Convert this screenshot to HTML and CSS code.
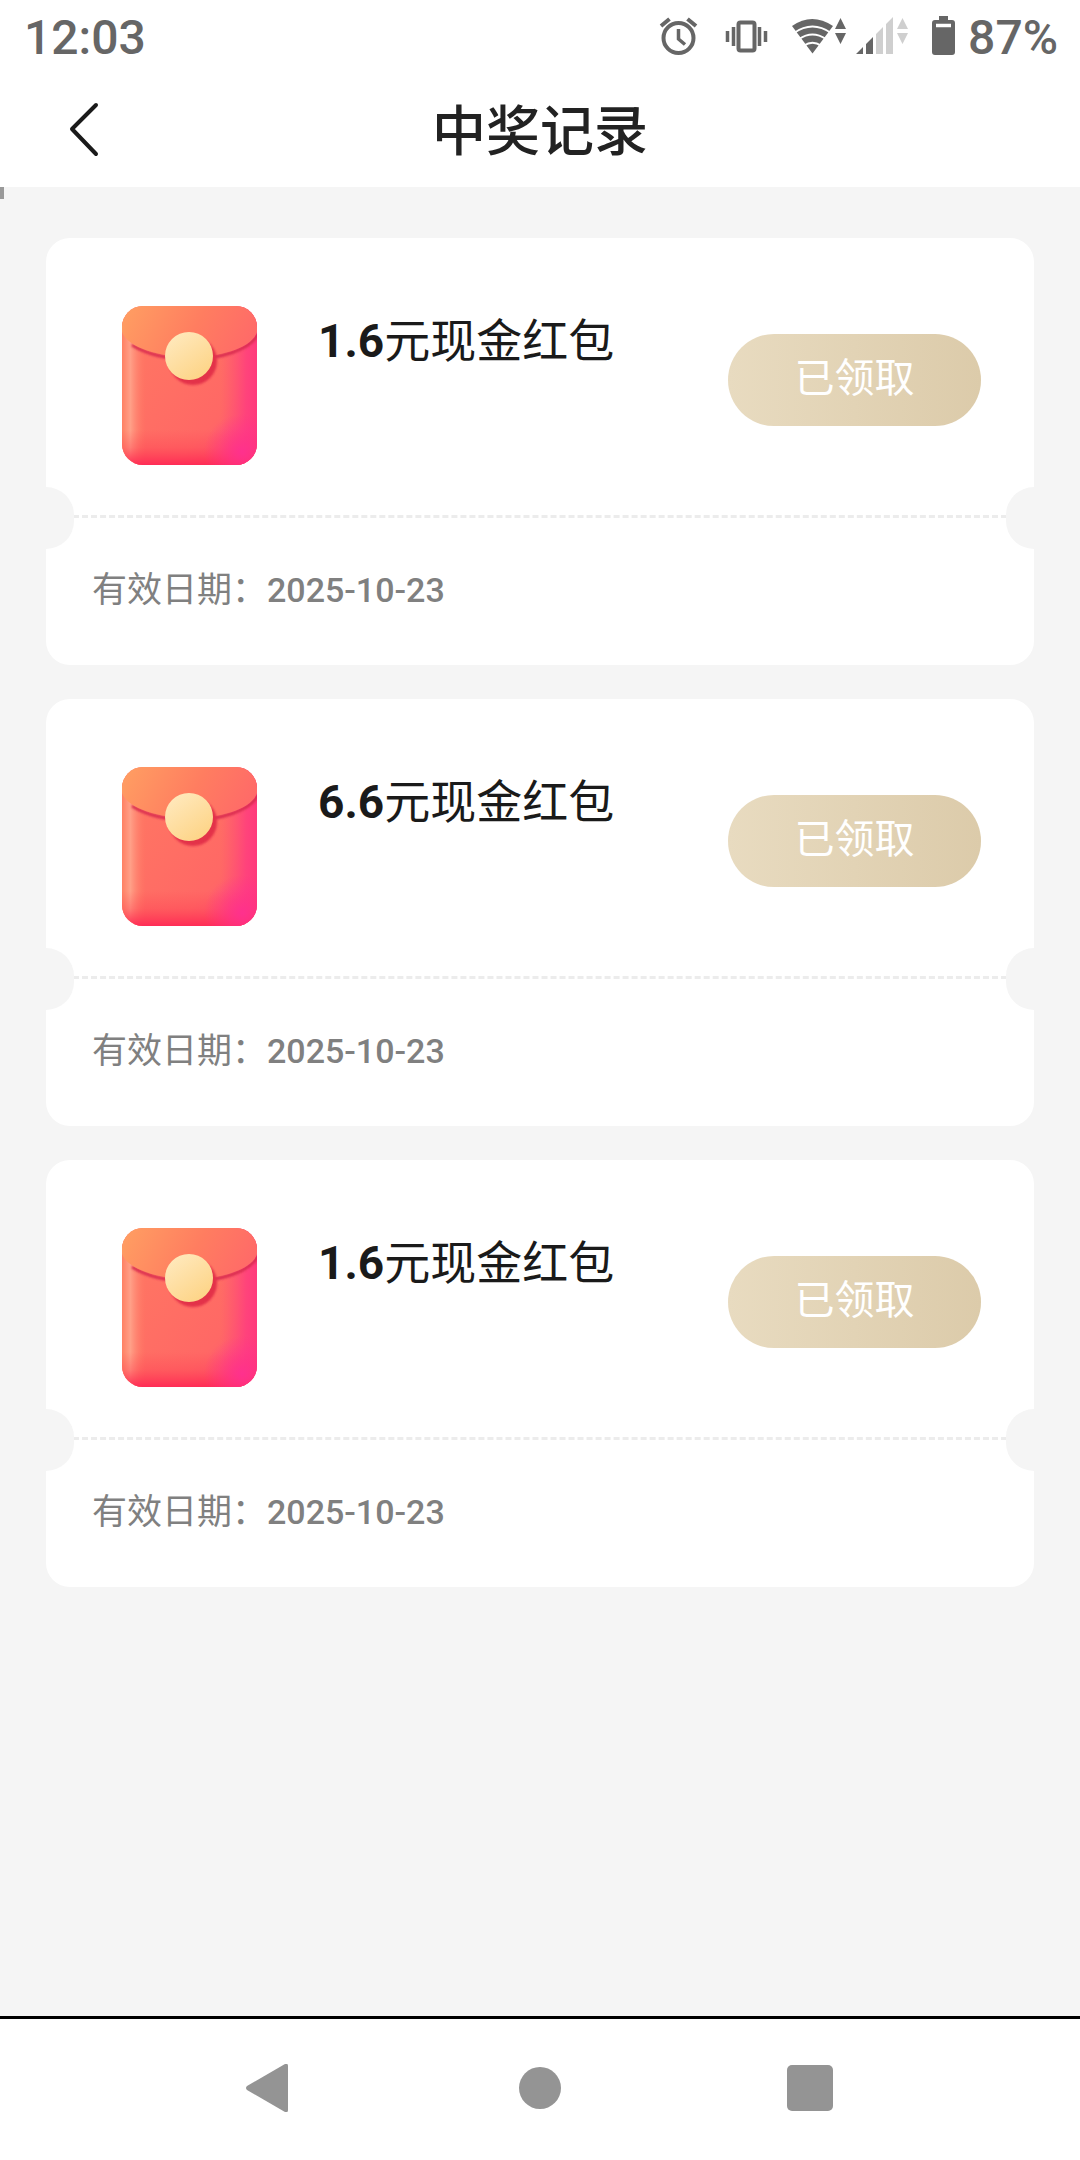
FILE: index.html
```html
<!DOCTYPE html>
<html lang="zh-CN">
<head>
<meta charset="utf-8">
<meta name="viewport" content="width=device-width, initial-scale=1">
<title>中奖记录</title>
<link rel="stylesheet" href="styles.css">
</head>
<body>
<svg class="sprite" width="0" height="0" aria-hidden="true">
  <defs>
    <linearGradient id="env-body" x1="0" y1="0" x2="1" y2="1">
      <stop offset="0" stop-color="#ff7a62"/>
      <stop offset="0.7" stop-color="#ff6865"/>
      <stop offset="1" stop-color="#ff4f7a"/>
    </linearGradient>
    <linearGradient id="env-left" x1="0" y1="0" x2="1" y2="0">
      <stop offset="0" stop-color="#ff8062"/>
      <stop offset="0.35" stop-color="#ffa088"/>
      <stop offset="1" stop-color="#ff7a62" stop-opacity="0"/>
    </linearGradient>
    <linearGradient id="env-right" x1="0" y1="0" x2="1" y2="0">
      <stop offset="0" stop-color="#ff4a78" stop-opacity="0"/>
      <stop offset="0.7" stop-color="#ff3a80" stop-opacity="0.8"/>
      <stop offset="1" stop-color="#ff3a7c"/>
    </linearGradient>
    <linearGradient id="env-bottom" x1="0" y1="0" x2="0" y2="1">
      <stop offset="0" stop-color="#ff4050" stop-opacity="0"/>
      <stop offset="0.5" stop-color="#ff3c52" stop-opacity="0.35"/>
      <stop offset="1" stop-color="#ff2c56"/>
    </linearGradient>
    <radialGradient id="env-corner" cx="140" cy="160" r="38" gradientUnits="userSpaceOnUse">
      <stop offset="0" stop-color="#ff2f92" stop-opacity="0.9"/>
      <stop offset="0.4" stop-color="#ff2f90" stop-opacity="0.55"/>
      <stop offset="1" stop-color="#ff2f8c" stop-opacity="0"/>
    </radialGradient>
    <linearGradient id="env-flap" x1="0" y1="0.3" x2="1" y2="0.5">
      <stop offset="0" stop-color="#ff9c62"/>
      <stop offset="0.55" stop-color="#ff7d60"/>
      <stop offset="1" stop-color="#ff6a68"/>
    </linearGradient>
    <linearGradient id="env-coin" x1="0.1" y1="0" x2="0.8" y2="1">
      <stop offset="0" stop-color="#ffeac0"/>
      <stop offset="1" stop-color="#fdd384"/>
    </linearGradient>
    <clipPath id="env-clip"><rect x="20" y="14" width="135" height="159" rx="21"/></clipPath>
    <filter id="env-soft" x="-20%" y="-20%" width="140%" height="140%"><feGaussianBlur stdDeviation="1"/></filter>
  </defs>
  <symbol id="envelope" viewBox="0 0 176 176">
    <g clip-path="url(#env-clip)">
      <rect x="20" y="14" width="135" height="159" fill="url(#env-body)"/>
      <rect x="20" y="14" width="24" height="159" fill="url(#env-left)"/>
      <rect x="119" y="14" width="36" height="159" fill="url(#env-right)"/>
      <rect x="20" y="138" width="135" height="35" fill="url(#env-bottom)"/>
      <rect x="100" y="120" width="55" height="53" fill="url(#env-corner)"/>
      <path d="M30 53C46 63 66 67 88 67C118 67 148 58 156 42" fill="none" stroke="#d92c50" stroke-width="3" filter="url(#env-soft)"/>
      <path d="M20 14H155V40C150 56 118 65 88 65C58 65 26 56 20 40Z" fill="url(#env-flap)"/>
      <circle cx="91" cy="69" r="24" fill="#e3304a" filter="url(#env-soft)"/>
      <circle cx="87" cy="64" r="24" fill="url(#env-coin)"/>
    </g>
  </symbol>
</svg>

<div class="status-bar">
  <span class="status-text">12:03</span>
  <div class="status-icons">
    <svg width="52" height="72" viewBox="656 0 52 72" aria-hidden="true">
      <circle cx="678.500" cy="38" r="15" fill="none" stroke="#666" stroke-width="4"/>
      <path d="M678.500 29V39L685 44.500" fill="none" stroke="#666" stroke-width="3.500"/>
      <path d="M661 26L669.500 19M696 26L687.500 19" stroke="#666" stroke-width="4"/>
    </svg>
    <svg width="60" height="72" viewBox="716 0 60 72" aria-hidden="true">
      <rect x="738.500" y="22.500" width="16" height="28" rx="2" fill="none" stroke="#666" stroke-width="4"/>
      <path d="M727.500 31V42M733.500 27V46M759.500 27V46M765.500 31V42" stroke="#666" stroke-width="3.500"/>
    </svg>
    <svg width="64" height="72" viewBox="784 0 64 72" aria-hidden="true">
      <path d="M792 26Q812 12 833 26L812.500 53.500Z" fill="#666"/>
      <path d="M794 33Q812.500 20 831 33M799 39Q812.500 30 826 39M804 45.500Q812.500 40 821 45.500" fill="none" stroke="#fff" stroke-width="1.800"/>
      <path d="M840.500 18L846 29H835ZM840.500 44L846 33H835Z" fill="#666"/>
    </svg>
    <svg width="60" height="72" viewBox="856 0 60 72" aria-hidden="true">
      <path d="M856 54L863 47V54ZM866 54V44L873 37V54Z" fill="#666"/>
      <path d="M876 54V34L883 27V54ZM886 54V24L893 17V54ZM902.500 18L908 29H897ZM902.500 44L908 33H897Z" fill="#cfcfcf"/>
    </svg>
    <svg width="36" height="72" viewBox="924 0 36 72" aria-hidden="true">
      <path d="M939 16H948V20H952Q955 20 955 23V52Q955 55 952 55H935Q932 55 932 52V23Q932 20 935 20H939Z" fill="#666"/>
      <path d="M936 25.500H951" stroke="#fff" stroke-width="3.500"/>
    </svg>
    <span class="status-text">87%</span>
  </div>
</div>

<header class="header">
  <button class="back" type="button" aria-label="返回">
    <svg width="32" height="56" viewBox="0 0 32 56" aria-hidden="true"><path d="M28 3L4 27L28 52" fill="none" stroke="#1a1a1a" stroke-width="4" stroke-linecap="round" stroke-linejoin="round"/></svg>
  </button>
  <h1 class="title">中奖记录</h1>
</header>

<main class="records">
  <article class="ticket">
    <div class="ticket-main">
      <svg class="ticket-image" aria-hidden="true"><use href="#envelope"/></svg>
      <h2 class="prize"><b>1.6</b>元现金红包</h2>
      <button class="claimed" type="button">已领取</button>
    </div>
    <p class="validity">有效日期：<time class="date" datetime="2025-10-23">2025-10-23</time></p>
  </article>
  <article class="ticket">
    <div class="ticket-main">
      <svg class="ticket-image" aria-hidden="true"><use href="#envelope"/></svg>
      <h2 class="prize"><b>6.6</b>元现金红包</h2>
      <button class="claimed" type="button">已领取</button>
    </div>
    <p class="validity">有效日期：<time class="date" datetime="2025-10-23">2025-10-23</time></p>
  </article>
  <article class="ticket">
    <div class="ticket-main">
      <svg class="ticket-image" aria-hidden="true"><use href="#envelope"/></svg>
      <h2 class="prize"><b>1.6</b>元现金红包</h2>
      <button class="claimed" type="button">已领取</button>
    </div>
    <p class="validity">有效日期：<time class="date" datetime="2025-10-23">2025-10-23</time></p>
  </article>
</main>

<nav class="system-nav" aria-label="系统导航">
  <button class="nav-button" type="button" aria-label="后退">
    <svg width="48" height="48" viewBox="0 0 48 48" aria-hidden="true"><path d="M39 0Q42 -1 42 2V46Q42 49 39 48L1 26Q-1 24 1 22Z" fill="#949494"/></svg>
  </button>
  <button class="nav-button" type="button" aria-label="主页">
    <svg width="48" height="48" viewBox="0 0 48 48" aria-hidden="true"><circle cx="24" cy="24" r="21" fill="#949494"/></svg>
  </button>
  <button class="nav-button" type="button" aria-label="最近任务">
    <svg width="48" height="48" viewBox="0 0 48 48" aria-hidden="true"><rect x="1" y="1" width="46" height="46" rx="5" fill="#949494"/></svg>
  </button>
</nav>
</body>
</html>
```
FILE: styles.css
```css
* {
  box-sizing: border-box;
}

body {
  margin: 0;
  min-height: 100vh;
  display: flex;
  flex-direction: column;
  background: #f5f5f5;
  color: #1a1a1a;
  font-family: Roboto, "Noto Sans CJK SC", sans-serif;
}

h1, h2, p {
  margin: 0;
  font-weight: 400;
}

button {
  padding: 0;
  border: 0;
  background: none;
  font: inherit;
}

svg {
  display: block;
}

.sprite {
  position: absolute;
}

.status-bar {
  display: flex;
  justify-content: space-between;
  height: 72px;
  padding: 0 22px 0 24px;
  background: #fff;
}

.status-icons {
  display: flex;
  gap: 8px;
}

.status-text {
  color: #666;
  font-size: 48px;
  font-weight: 500;
  line-height: 76px;
}

.header {
  display: grid;
  grid-template-columns: 120px 1fr 120px;
  align-items: center;
  height: 115px;
  padding: 0 24px;
  background: #fff;
}

.back {
  justify-self: center;
}

.title {
  padding-top: 6px;
  color: #222;
  font-size: 54px;
  font-weight: 500;
  line-height: 80px;
  text-align: center;
}

.records {
  position: relative;
  flex: 1;
  display: flex;
  flex-direction: column;
  gap: 34px;
  padding: 51px 46px;
}

.records::before {
  content: "";
  position: absolute;
  top: 0;
  left: 0;
  width: 4px;
  height: 12px;
  background: #999;
}

.ticket {
  border-radius: 24px;
  background: #fff;
}

.ticket-main {
  position: relative;
  display: flex;
  align-items: center;
  gap: 40px;
  padding: 54px 53px 47px 56px;
  border-bottom: 3px dashed #ececec;
}

/* punched notches at both ends of the tear line */
.ticket-main::before,
.ticket-main::after {
  content: "";
  position: absolute;
  bottom: -34px;
  width: 28px;
  height: 62px;
  background: #f5f5f5;
}

.ticket-main::before {
  left: 0;
  border-radius: 0 31px 31px 0;
}

.ticket-main::after {
  right: 0;
  border-radius: 31px 0 0 31px;
}

.ticket-image {
  flex: none;
  width: 176px;
  height: 176px;
}

.prize {
  flex: 1;
  align-self: flex-start;
  padding-top: 18px;
  font-size: 46px;
  line-height: 62px;
}

.claimed {
  width: 253px;
  height: 92px;
  padding-bottom: 2px;
  border-radius: 46px;
  background: linear-gradient(90deg, #e8dbc0, #dccbaa);
  color: #fff;
  font-size: 40px;
  line-height: 60px;
}

.validity {
  padding: 45px 46px 47px;
  color: #808080;
  font-size: 35px;
  line-height: 55px;
}

.date {
  font-size: 34px;
  font-weight: 500;
}

.system-nav {
  display: grid;
  grid-template-columns: repeat(3, 1fr);
  place-items: center;
  height: 144px;
  padding: 0 12.5% 3px;
  border-top: 3px solid #000;
  background: #fff;
}
```
